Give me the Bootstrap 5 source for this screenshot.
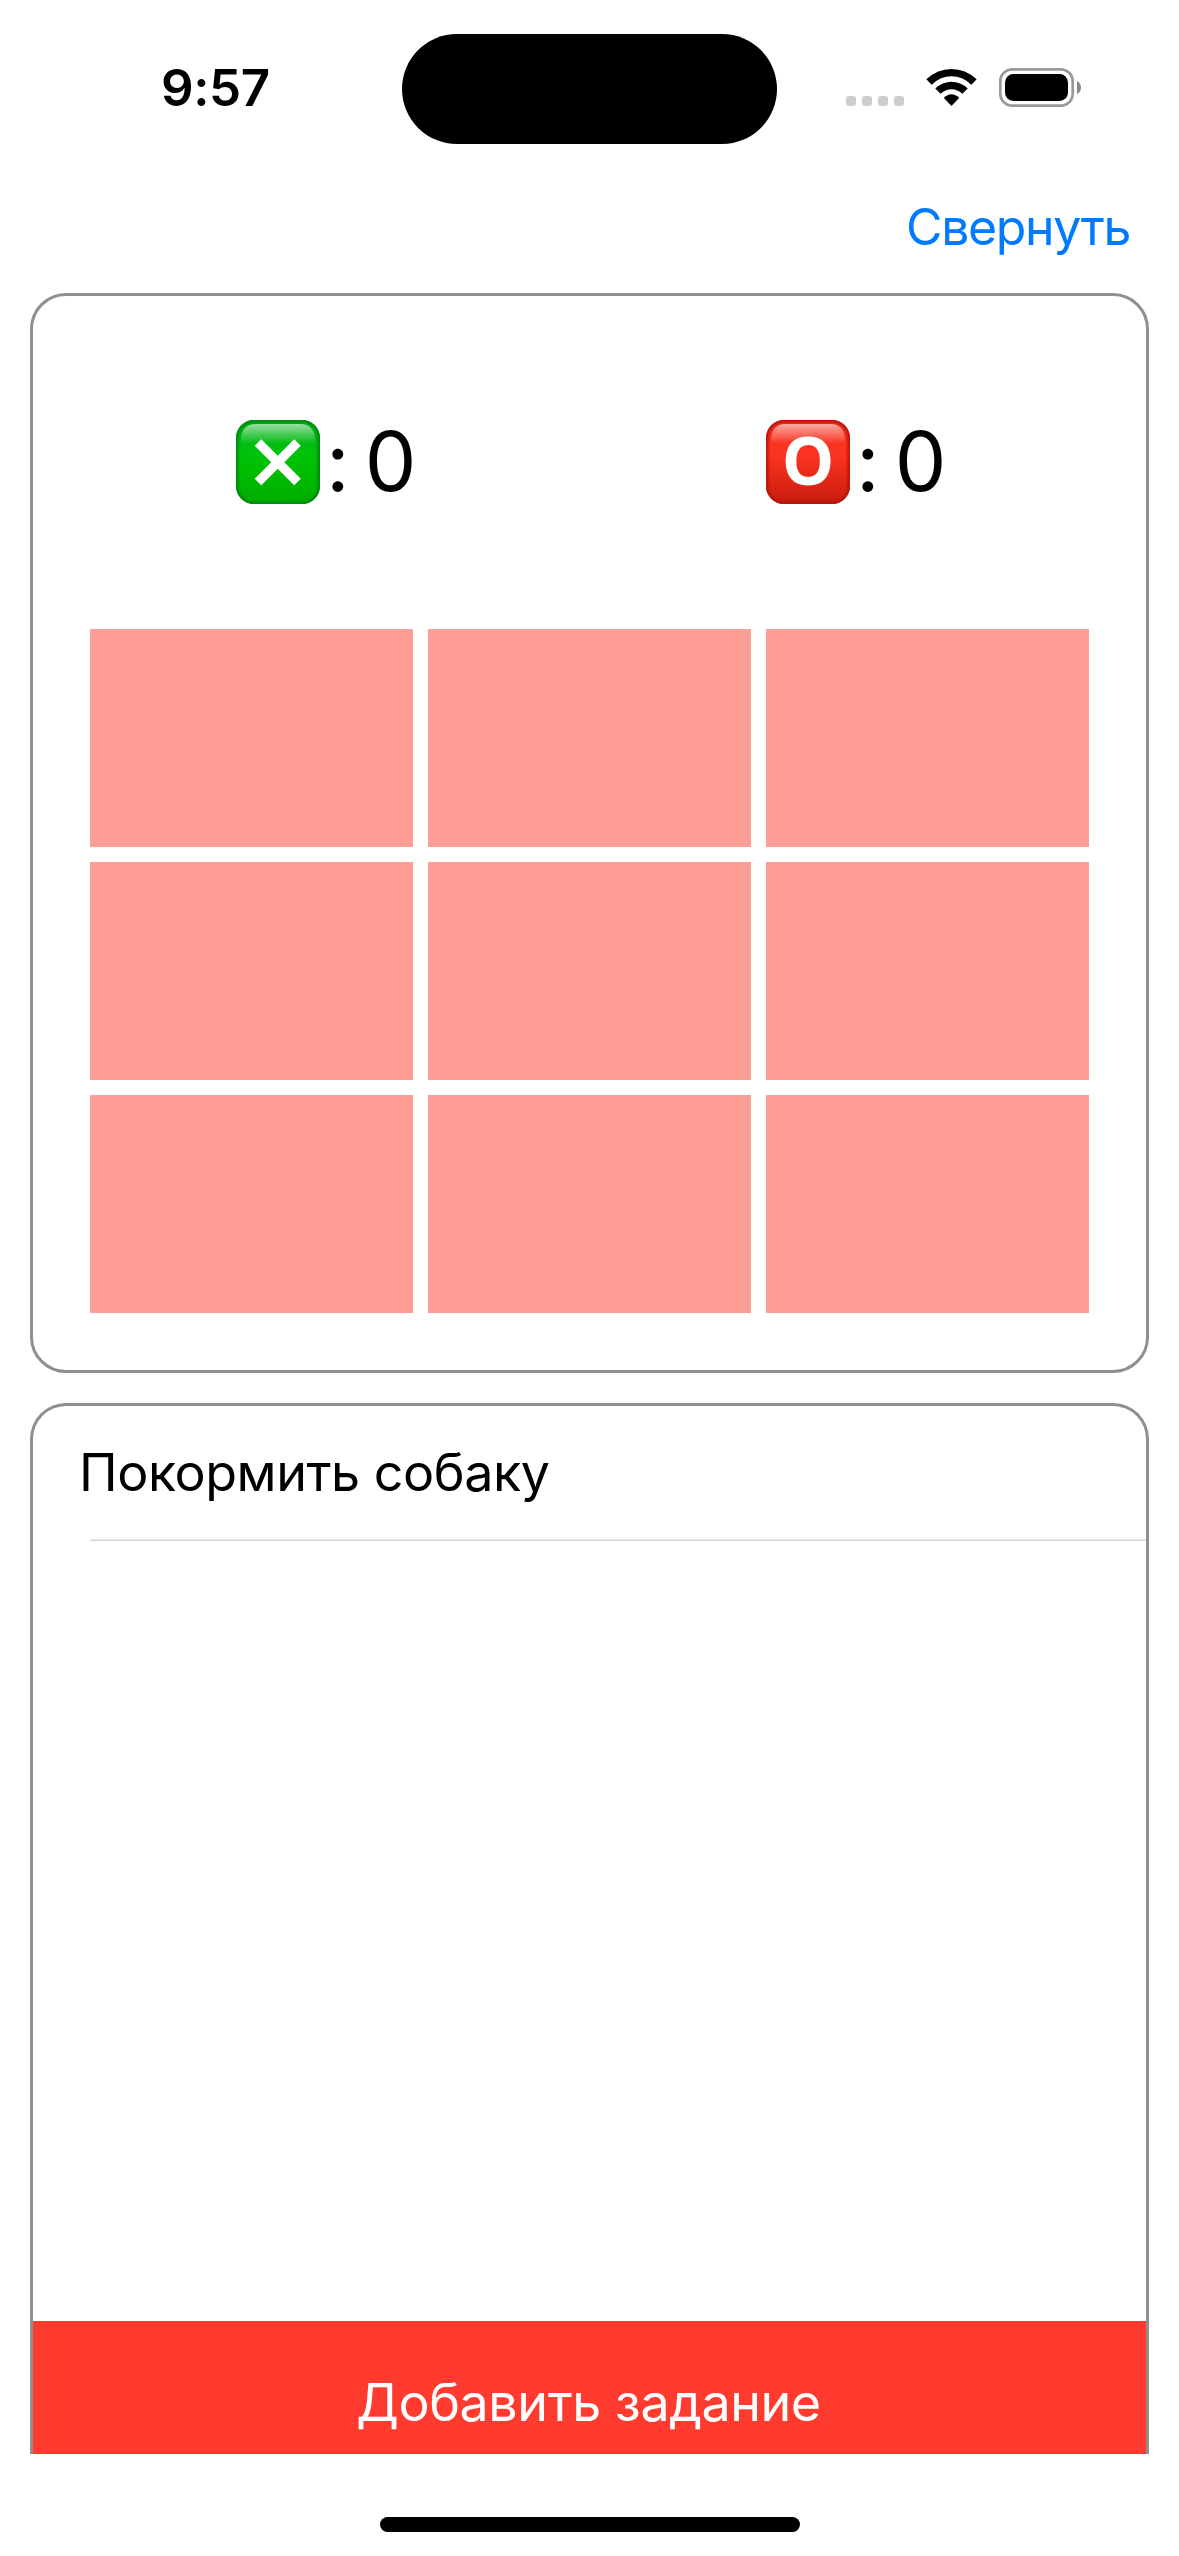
<!DOCTYPE html>
<html lang="ru">
<head>
<meta charset="utf-8">
<meta name="viewport" content="width=device-width, initial-scale=1">
<title>Свернуть</title>
<link href="https://cdn.jsdelivr.net/npm/bootstrap@5.3.0/dist/css/bootstrap.min.css" rel="stylesheet">
<style>
body{font-family:Inter,"Liberation Sans",sans-serif;color:#000}
.phone{width:1179px;height:2556px}
.status-bar{height:177px;padding:33px 98px 0 161px}
.clock{width:241px;font-size:51px;font-weight:600;line-height:110px;letter-spacing:-.4px}
.island{width:375px;height:110.5px;border-radius:56px;margin-top:.6px}
.indicators{height:39px;margin-top:35px}
.top-nav{height:116px;padding:20px 49px 0 0}
.collapse-link{font-size:50px;line-height:60px;letter-spacing:-1.38px;color:#007aff;border:0}
.panel{margin:0 30px;border:3px solid #8e8e93}
.game{height:1080px;border-radius:36px;padding:0 57px}
.score-row{height:332px;margin-bottom:1px;padding:0 3px}
.score{width:530px;padding-left:143px;font-size:82px;line-height:100px}
.score svg{overflow:visible}
.score-value{margin:0 0 0 6px;font-feature-settings:"calt" 0;word-spacing:-8px}
.board{display:grid;grid-template-columns:repeat(3,323px);grid-auto-rows:218px;gap:15px}
.cell{background:#ff9d97;border:0;padding:0}
.tasks{height:1051px;margin-top:30px;border-bottom:0;border-radius:36px 36px 0 0}
.task-item{height:133px;font-size:52px;line-height:60px;letter-spacing:-.45px;padding:37px 0 0 46px}
.divider{height:2px;margin-left:57px;background:linear-gradient(#ececec 50%,#d4d4d5 50%)}
.add-task{height:133px;background:#ff3b30;font-size:52px;line-height:60px;letter-spacing:-.42px;padding:52px 2px 0 0;border:0}
.home-bar{width:420px;height:15px;border-radius:8px;margin:63px auto 0}
</style>
</head>
<body class="bg-white">
<div class="phone d-flex flex-column overflow-hidden">
  <header class="status-bar d-flex align-items-start">
    <div class="clock">9:57</div>
    <div class="island bg-black"></div>
    <svg class="indicators ms-auto" width="236" height="39" viewBox="845 68 236 39">
      <g fill="#ccc"><rect x="846" y="96" width="10" height="10" rx="3"/><rect x="862" y="96" width="10" height="10" rx="3"/><rect x="878" y="96" width="10" height="10" rx="3"/><rect x="894" y="96" width="10" height="10" rx="3"/></g>
      <path d="M926.300 79.300Q937.500 69 951.500 69T976.700 79.300L971.300 84.700Q962.500 76.300 951.500 76.300T931.700 84.700Z"/>
      <path d="M935.300 88.400Q942.500 81.700 951.500 81.700T967.700 88.400L962.500 93.800Q957.500 89.300 951.500 89.300T940.500 93.800Z"/>
      <path d="M943.900 98Q947.300 94.300 951.500 94.300T959.100 98L951.500 106Z"/>
      <rect x="1000.300" y="69.300" width="72.400" height="36.400" rx="12" fill="none" stroke="#999" stroke-width="2.700"/>
      <rect x="1005" y="74" width="63" height="27" rx="8.500"/>
      <path d="M1077 81Q1081 83.500 1081 87.500T1077 94Z" fill="#888"/>
    </svg>
  </header>

  <nav class="top-nav d-flex justify-content-end align-items-start">
    <button class="collapse-link btn p-0">Свернуть</button>
  </nav>

  <section class="panel game flex-shrink-0">
    <div class="score-row d-flex">
      <div class="score flex-shrink-0 d-flex align-items-center"><svg width="84" height="84" viewBox="0 0 84 84">
        <defs>
          <linearGradient id="green" x2="0" y2="1"><stop offset="0" stop-color="#00ad18"/><stop offset=".4" stop-color="#00c30c"/><stop offset=".6" stop-color="#00be00"/><stop offset="1" stop-color="#00ac00"/></linearGradient>
          <linearGradient id="red" x2="0" y2="1"><stop offset="0" stop-color="#f32c1b"/><stop offset=".4" stop-color="#fc3421"/><stop offset=".65" stop-color="#e92a18"/><stop offset="1" stop-color="#c61b0e"/></linearGradient>
          <linearGradient id="gloss" x2="0" y2="1"><stop offset="0" stop-color="#fff" stop-opacity=".6"/><stop offset="1" stop-color="#fff" stop-opacity="0"/></linearGradient>
          <filter id="soft" x="-10%" y="-10%" width="120%" height="120%"><feGaussianBlur stdDeviation="1.300"/></filter>
          <clipPath id="tile"><rect width="84" height="84" rx="18"/></clipPath>
        </defs>
        <g clip-path="url(#tile)"><rect width="84" height="84" fill="url(#green)"/><rect width="84" height="84" rx="18" fill="none" stroke="#008a10" stroke-width="5" filter="url(#soft)"/><path d="M5 21Q5 4 20 4H64Q79 4 79 21V24H5Z" fill="url(#gloss)"/></g>
        <path d="M22 22.500 61.500 62M61.500 22.500 22 62" stroke="#fff" stroke-width="9.300"/>
      </svg><span class="score-value">: 0</span></div>
      <div class="score d-flex align-items-center"><svg width="84" height="84" viewBox="0 0 84 84">
        <g clip-path="url(#tile)"><rect width="84" height="84" fill="url(#red)"/><rect width="84" height="84" rx="18" fill="none" stroke="#b5180c" stroke-width="5" filter="url(#soft)"/><path d="M5 21Q5 4 20 4H64Q79 4 79 21V24H5Z" fill="url(#gloss)"/></g>
        <text x="42" y="65" text-anchor="middle" font-family="Noto Sans" font-weight="700" font-size="66" fill="#fff">O</text>
      </svg><span class="score-value">: 0</span></div>
    </div>
    <div class="board">
      <button class="cell"></button><button class="cell"></button><button class="cell"></button>
      <button class="cell"></button><button class="cell"></button><button class="cell"></button>
      <button class="cell"></button><button class="cell"></button><button class="cell"></button>
    </div>
  </section>

  <section class="panel tasks d-flex flex-column flex-shrink-0">
    <div class="task-item">Покормить собаку</div>
    <div class="divider"></div>
    <button class="add-task btn rounded-0 mt-auto text-white d-flex justify-content-center align-items-start">Добавить задание</button>
  </section>
  <div class="home-bar bg-black flex-shrink-0"></div>
</div>
<script src="https://cdn.jsdelivr.net/npm/bootstrap@5.3.0/dist/js/bootstrap.bundle.min.js"></script>
</body>
</html>
